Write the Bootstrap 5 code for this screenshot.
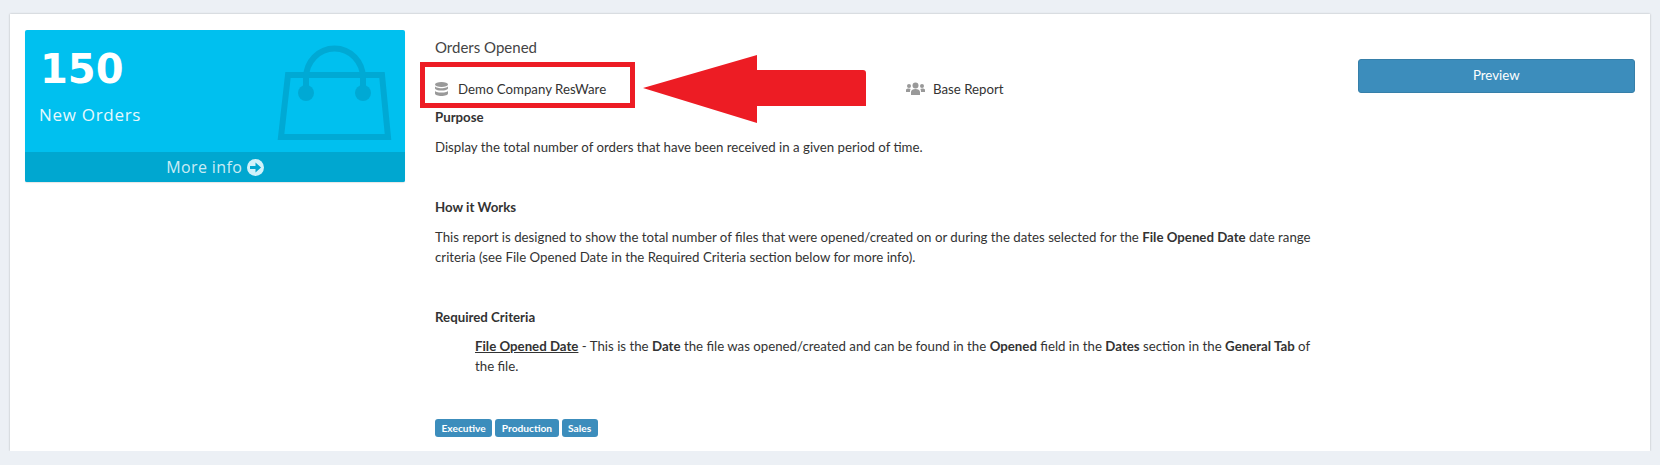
<!DOCTYPE html>
<html lang="en">
<head>
    <meta charset="UTF-8">
    <meta name="viewport" content="width=device-width, initial-scale=1.0">
    <title>Orders Opened</title>
    <link href="https://cdn.jsdelivr.net/npm/bootstrap@5.3.0/dist/css/bootstrap.min.css" rel="stylesheet">
    <style>
        body {
            background-color: #ecf0f5;
            color: #333;
            font-family: Lato, "Open Sans", sans-serif;
            font-size: 13.25px;
            line-height: 20px;
            overflow: hidden;
        }
        .page-wrap { padding: 14px 10px 0; }
        .report-card {
            position: relative;
            background: #fff;
            height: 437px;
            border-radius: 0;
            border: 0;
            box-shadow: 0 0 2px rgba(0, 0, 0, .25);
            padding-top: 16px;
        }
        .wide-gutter { --bs-gutter-x: 30px; margin-left: 0; margin-right: 0; }
        .nested-row { --bs-gutter-x: 30px; margin-left: 0; margin-right: 0; }
        .stat-box {
            position: relative;
            height: 152px;
            background: #00c0ef;
            color: #fff;
            border-radius: 2px;
            box-shadow: 0 1px 1px rgba(0, 0, 0, .1);
            overflow: hidden;
            font-family: "Open Sans", sans-serif;
        }
        .stat-number { font-family: "DejaVu Sans", sans-serif; font-size: 40px; font-weight: 700; line-height: 42px; padding: 18px 15px 0; }
        .stat-label { font-size: 17px; letter-spacing: .7px; line-height: 20px; padding: 15px 15px 0 14px; opacity: .9; }
        .stat-bag { position: absolute; top: 12px; right: 10px; }
        .stat-footer {
            position: absolute;
            left: 0;
            right: 0;
            bottom: 0;
            height: 30px;
            background: #00a7d0;
            color: rgba(255, 255, 255, .8);
            font-size: 16px;
            letter-spacing: .4px;
            line-height: 30px;
            text-align: center;
        }
        .report-title { font-size: 15px; font-weight: 400; line-height: 20px; margin: 7px 0 0; color: #444; }
        .meta-row { margin-top: 22px; height: 20px; }
        .meta-item { width: 471px; flex-shrink: 0; }
        .meta-item svg { margin-right: 10px; }
        .section-head { font-weight: 700; margin: 8px 0 0; }
        .section-gap { margin-top: 40px; }
        .section-text { margin: 10px 0 0; }
        .criteria-text { margin: 9px 0 0; padding-left: 40px; }
        .criteria-name { font-weight: 700; text-decoration: underline; }
        .tag-row { margin-top: 41px; }
        .tag-pill {
            display: inline-block;
            background: #3c8dbc;
            color: #fff;
            font-size: 10.2px;
            font-weight: 700;
            line-height: 18px;
            height: 18px;
            padding: 0 6.5px;
            border-radius: 3px;
            margin-right: 3px;
        }
        .preview-btn {
            display: block;
            width: 100%;
            height: 34px;
            margin-top: 29px;
            background: #3c8dbc;
            border: 1px solid #367fa9;
            color: #fff;
            font-size: 13.25px;
            padding: 0;
            border-radius: 3px;
        }
        .annotation-box {
            position: absolute;
            left: 410px;
            top: 48px;
            width: 215px;
            height: 46px;
            border: 5px solid #ed1c24;
        }
        .annotation-arrow { position: absolute; left: 633px; top: 41px; }
    </style>
</head>
<body>
    <div class="page-wrap">
        <div class="report-card">
            <div class="row wide-gutter">
                <div class="col-3">
                    <div class="stat-box">
                        <div class="stat-number">150</div>
                        <div class="stat-label">New Orders</div>
                        <svg class="stat-bag" width="120" height="100" viewBox="0 0 120 100" fill="none" stroke="#00a9d4">
                            <path d="M13 33H107L113 95H6Z" stroke-width="6"/>
                            <path d="M31 51V36A28 29 0 0 1 88 36V51" stroke-width="6"/>
                            <circle cx="31" cy="51" r="8" fill="#00a9d4" stroke="none"/>
                            <circle cx="88" cy="51" r="8" fill="#00a9d4" stroke="none"/>
                        </svg>
                        <div class="stat-footer">More info
                            <svg width="17" height="17" viewBox="0 0 16 16" style="vertical-align:-3px">
                                <circle cx="8" cy="8" r="8" fill="#d0f2fa"/>
                                <path d="M2.8 6.5H8V3.4L13.2 8 8 12.6V9.5H2.8Z" fill="#00a7d0"/>
                            </svg>
                        </div>
                    </div>
                </div>
                <div class="col-9 p-0">
                    <div class="row nested-row">
                        <div class="col-9">
                            <h5 class="report-title">Orders Opened</h5>
                            <div class="d-flex meta-row">
                                <div class="meta-item d-flex align-items-center">
                                    <svg width="13" height="14" viewBox="0 0 13 14" fill="#999">
                                        <ellipse cx="6.5" cy="2.5" rx="6.5" ry="2.5"/>
                                        <path d="M0 4V6.2C0 7.6 3 8.6 6.5 8.6S13 7.6 13 6.2V4C13 5.4 10 6.2 6.5 6.2S0 5.4 0 4Z"/>
                                        <path d="M0 8.4V11.5C0 12.9 3 14 6.5 14S13 12.9 13 11.5V8.4C13 9.8 10 10.6 6.5 10.6S0 9.8 0 8.4Z"/>
                                    </svg>
                                    <span>Demo Company ResWare</span>
                                </div>
                                <div class="d-flex align-items-center flex-shrink-0">
                                    <svg class="me-2" width="19" height="14" viewBox="0 0 19 14" fill="#999">
                                        <circle cx="9.5" cy="3.5" r="3"/>
                                        <circle cx="3" cy="4" r="2"/>
                                        <circle cx="16" cy="4" r="2"/>
                                        <path d="M5 13V10C5 8 7 7 9.5 7S14 8 14 10V13Z"/>
                                        <path d="M0 10V8C0 7 1 6.5 3 6.5L4.6 7C4 8 4 9 4 10Z"/>
                                        <path d="M19 10V8C19 7 18 6.5 16 6.5L14.4 7C15 8 15 9 15 10Z"/>
                                    </svg>
                                    <span>Base Report</span>
                                </div>
                            </div>
                            <p class="section-head">Purpose</p>
                            <p class="section-text">Display the total number of orders that have been received in a given period of time.</p>
                            <p class="section-head section-gap">How it Works</p>
                            <p class="section-text">This report is designed to show the total number of files that were opened/created on or during the dates selected for the <b>File Opened Date</b> date range criteria (see File Opened Date in the Required Criteria section below for more info).</p>
                            <p class="section-head section-gap">Required Criteria</p>
                            <p class="criteria-text"><span class="criteria-name">File Opened Date</span> - This is the <b>Date</b> the file was opened/created and can be found in the <b>Opened</b> field in the <b>Dates</b> section in the <b>General Tab</b> of the file.</p>
                            <div class="tag-row"><span class="tag-pill">Executive</span><span class="tag-pill">Production</span><span class="tag-pill">Sales</span></div>
                        </div>
                        <div class="col-3">
                            <button type="button" class="btn preview-btn">Preview</button>
                        </div>
                    </div>
                </div>
            </div>
            <div class="annotation-box"></div>
            <svg class="annotation-arrow" width="223" height="68" viewBox="0 0 223 68">
                <path d="M0 33L114 0V15H220Q223 15 223 18V51H114V68Z" fill="#ed1c24"/>
            </svg>
        </div>
    </div>
    <script src="https://cdn.jsdelivr.net/npm/bootstrap@5.3.0/dist/js/bootstrap.bundle.min.js"></script>
</body>
</html>
